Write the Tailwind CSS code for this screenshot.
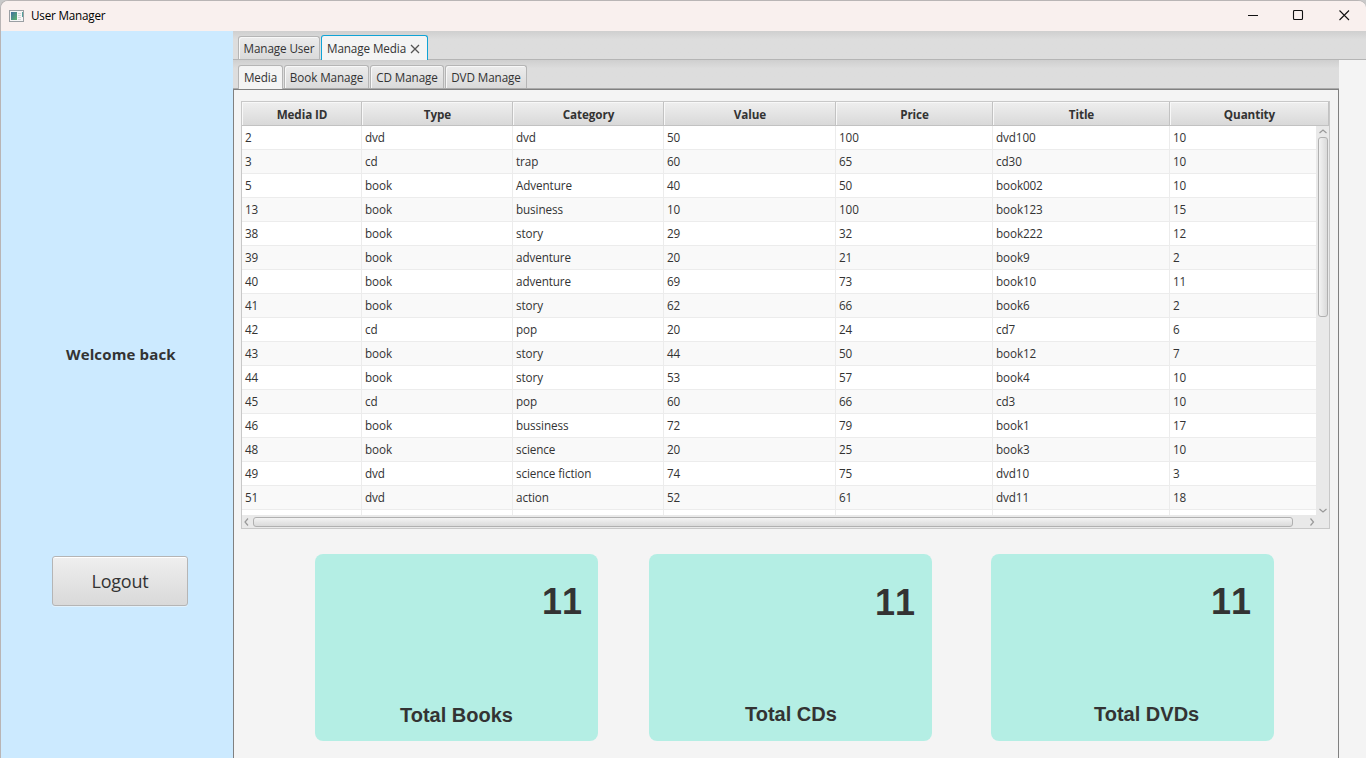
<!DOCTYPE html>
<html lang="en">
<head>
<meta charset="utf-8">
<title>User Manager</title>
<script src="https://cdn.jsdelivr.net/npm/@tailwindcss/browser@4"></script>
</head>
<body class="h-[758px] w-[1366px] overflow-hidden bg-[#c9c9c9] font-['Open_Sans','Noto_Sans',sans-serif] text-[11.7px] tracking-[-0.1px] text-[#333]">
<div class="flex h-[758px] flex-col overflow-hidden rounded-t-lg border-t border-l border-[#b9b5b5] bg-[#f4f4f4]">
  <header class="flex h-[30px] shrink-0 items-center bg-[#f9f0ee] pl-2 text-black">
    <svg class="mr-[7px]" width="15" height="12" viewBox="0 0 15 12">
      <defs><linearGradient id="g" x1="0" y1="0" x2="1" y2="1"><stop offset="0" stop-color="#3f6f9f"/><stop offset="1" stop-color="#5cb56c"/></linearGradient></defs>
      <rect x=".5" y=".5" width="14" height="11" fill="#f6f6f6" stroke="#9a9fa3"/>
      <rect x="2" y="2" width="6" height="8" fill="url(#g)"/>
      <path d="M9 3.5h3M9 5.5h3M9 7.5h3M9 9.5h3" stroke="#d3d7d8"/>
      <rect x="13" y="2" width="1" height="5" fill="#54a09b"/>
    </svg>
    <span class="tracking-[-0.2px]">User Manager</span>
    <svg class="ml-auto mr-[15px]" width="103" height="12" viewBox="0 0 103 12" fill="none" stroke="#111" stroke-width="1.1">
      <path d="M0 5.5h10"/><rect x="45.5" y=".5" width="9" height="9" rx="1"/><path d="M91.500.5l9.500 9.500M101 .5l-9.500 9.500"/>
    </svg>
  </header>
  <div class="flex min-h-0 grow">
    <aside class="flex w-[232px] shrink-0 flex-col bg-[#cceaff]">
      <div class="mt-[312px] pl-[65px] text-[15px] leading-[22px] font-bold tracking-[0.14px]">Welcome back</div>
      <button class="mt-[191px] ml-[51px] h-[50px] w-[136px] rounded-[3px] border border-[#b5b5b5] bg-linear-to-b from-[#efefef] to-[#d9d9d9] text-[18px] tracking-[-0.2px] shadow-[inset_0_1px_0_#fff,0_1px_0_#e3f2fc]">Logout</button>
    </aside>
    <main class="flex min-w-0 grow flex-col">
      <nav class="flex h-[29px] shrink-0 items-end gap-px border-b border-[#b5b5b5] bg-linear-to-b from-[#cfcfcf] via-[#dddddd] via-30% to-[#dddddd] pl-[5px]">
        <div class="flex h-[23px] w-[82px] items-center justify-center rounded-t-[3px] border border-b-0 border-[#b5b5b5] bg-linear-to-b from-[#ececec] to-[#dadada] pt-0.5 shadow-[inset_1px_1px_0_#f8f8f8]">Manage User</div>
        <div class="-mb-px flex h-[25px] w-[107px] items-center gap-1 rounded-t-[3px] border border-b-0 border-[#0fa3d6] bg-[#f4f4f4] pt-px pl-[5px]">
          <span>Manage Media</span>
          <svg width="10" height="10" viewBox="0 0 10 10"><path d="M1 1l8 8M9 1L1 9" stroke="#555" stroke-width="1.300"/></svg>
        </div>
      </nav>
      <div class="flex min-h-0 w-[1106px] grow flex-col">
        <nav class="flex h-[29px] shrink-0 items-end gap-px border-b border-[#aaa] bg-linear-to-b from-[#cfcfcf] via-[#dddddd] via-30% to-[#dddddd] pl-[5px]">
          <div class="-mb-px flex h-6 w-[45px] items-center justify-center rounded-t-[3px] border border-b-0 border-[#b5b5b5] bg-[#f4f4f4] pt-px">Media</div>
          <div class="flex h-[23px] w-[85px] items-center justify-center rounded-t-[3px] border border-b-0 border-[#b5b5b5] bg-linear-to-b from-[#ececec] to-[#dadada] pt-0.5 shadow-[inset_1px_1px_0_#f8f8f8]">Book Manage</div>
          <div class="flex h-[23px] w-[74px] items-center justify-center rounded-t-[3px] border border-b-0 border-[#b5b5b5] bg-linear-to-b from-[#ececec] to-[#dadada] pt-0.5 shadow-[inset_1px_1px_0_#f8f8f8]">CD Manage</div>
          <div class="flex h-[23px] w-[82px] items-center justify-center rounded-t-[3px] border border-b-0 border-[#b5b5b5] bg-linear-to-b from-[#ececec] to-[#dadada] pt-0.5 shadow-[inset_1px_1px_0_#f8f8f8]">DVD Manage</div>
        </nav>
        <section class="flex grow flex-col border-x border-t border-[#808080] pl-[7px]">
          <div class="mt-[11px] flex h-[428px] w-[1089px] shrink-0 flex-col border border-[#c8c8c8] bg-white">
            <div id="head" class="grid h-6 shrink-0 grid-cols-[120px_151px_151px_172px_157px_177px_159px] border-b border-[#c2c2c2] bg-linear-to-b from-[#efefef] to-[#d9d9d9] font-bold"></div>
            <div class="flex h-[389px]">
              <div id="rows" class="w-[1074px] overflow-hidden bg-white"></div>
              <div class="flex w-[13px] flex-col items-center bg-[#e9e9e9] pl-px">
                <svg class="my-0.5 shrink-0" width="10" height="7" viewBox="0 0 10 7"><path d="M1.500 5L5 2l3.500 3" fill="none" stroke="#999" stroke-width="1.200"/></svg>
                <div class="h-[180px] w-[10px] rounded-[3px] border border-[#b0b0b0] bg-linear-to-r from-[#f3f3f3] to-[#dadada]"></div>
                <svg class="mt-auto mb-px" width="10" height="7" viewBox="0 0 10 7"><path d="M1.500 2L5 5l3.500-3" fill="none" stroke="#999" stroke-width="1.200"/></svg>
              </div>
            </div>
            <div class="flex h-[13px] items-center bg-[#e9e9e9]">
              <svg class="mr-0.5 ml-px" width="8" height="8" viewBox="0 0 8 8"><path d="M5 .5L2 4l3 3.500" fill="none" stroke="#999" stroke-width="1.200"/></svg>
              <div class="h-[10px] w-[1040px] rounded-[3px] border border-[#b0b0b0] bg-linear-to-b from-[#f3f3f3] to-[#dadada]"></div>
              <svg class="ml-[15px]" width="8" height="8" viewBox="0 0 8 8"><path d="M2.500.5l3 3.500-3 3.500" fill="none" stroke="#999" stroke-width="1.200"/></svg>
            </div>
          </div>
          <div class="mt-[25px] flex pl-[74px] font-['Liberation_Sans',sans-serif] font-bold tracking-normal text-[#333]">
            <div class="flex h-[187px] w-[283px] flex-col rounded-lg bg-[#b4eee4] pt-[27px]">
              <div class="pr-[16px] text-right text-[36px] leading-[42px] [font-kerning:none]">11</div>
              <div class="mt-[80px] pl-[85px] text-[20px] leading-6">Total Books</div>
            </div>
            <div class="ml-[51px] flex h-[187px] w-[283px] flex-col rounded-lg bg-[#b4eee4] pt-[28px]">
              <div class="pr-[17px] text-right text-[36px] leading-[42px] [font-kerning:none]">11</div>
              <div class="mt-[78px] pl-[96px] text-[20px] leading-6">Total CDs</div>
            </div>
            <div class="ml-[59px] flex h-[187px] w-[283px] flex-col rounded-lg bg-[#b4eee4] pt-[27px]">
              <div class="pr-[23px] text-right text-[36px] leading-[42px] [font-kerning:none]">11</div>
              <div class="mt-[79px] pl-[103px] text-[20px] leading-6">Total DVDs</div>
            </div>
          </div>
        </section>
      </div>
    </main>
  </div>
</div>
<script>
const cols = ["Media ID","Type","Category","Value","Price","Title","Quantity"];
const data = [
 [2,"dvd","dvd",50,100,"dvd100",10],[3,"cd","trap",60,65,"cd30",10],
 [5,"book","Adventure",40,50,"book002",10],[13,"book","business",10,100,"book123",15],
 [38,"book","story",29,32,"book222",12],[39,"book","adventure",20,21,"book9",2],
 [40,"book","adventure",69,73,"book10",11],[41,"book","story",62,66,"book6",2],
 [42,"cd","pop",20,24,"cd7",6],[43,"book","story",44,50,"book12",7],
 [44,"book","story",53,57,"book4",10],[45,"cd","pop",60,66,"cd3",10],
 [46,"book","bussiness",72,79,"book1",17],[48,"book","science",20,25,"book3",10],
 [49,"dvd","science fiction",74,75,"dvd10",3],[51,"dvd","action",52,61,"dvd11",18],
 ["","","","","","",""]
];
document.getElementById("head").innerHTML = cols.map(c =>
 `<div class="flex items-center justify-center border-r border-[#c2c2c2] pt-0.5 pl-px shadow-[inset_1px_1px_0_#f8f8f8]">${c}</div>`).join("");
document.getElementById("rows").innerHTML = data.map(r =>
 `<div class="grid h-6 w-[1087px] grid-cols-[120px_151px_151px_172px_157px_177px_159px] border-b border-[#ececec] odd:bg-white even:bg-[#f9f9f9]">` +
 r.map(v => `<div class="border-r border-[#ececec] pl-[3px] leading-[23px]">${v}</div>`).join("") + `</div>`).join("");
</script>
</body>
</html>
